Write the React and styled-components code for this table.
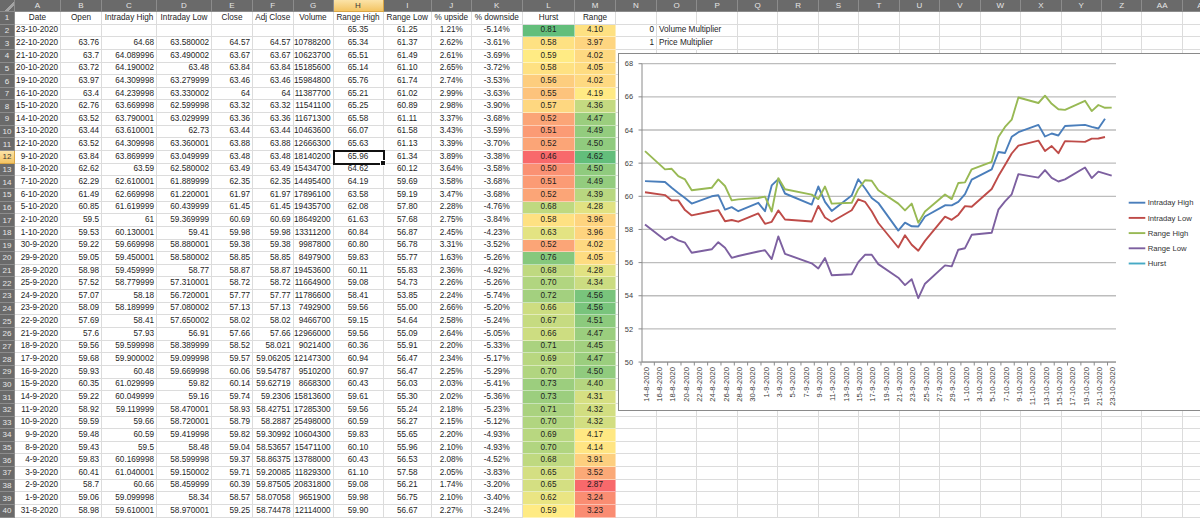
import React from 'react';
import styled, { createGlobalStyle, css } from 'styled-components';

const GlobalStyle = createGlobalStyle`
  html, body {
    margin: 0;
    padding: 0;
    background: #ffffff;
    overflow: hidden;
  }
  body {
    font-family: 'Liberation Sans', Arial, sans-serif;
  }
`;

// column widths A..AB (px)
const WIDTHS = [46, 41, 55, 55, 41, 40.5, 40, 50, 48.5, 39.5, 51.5, 52, 41, 41,
  40.46, 40.46, 40.46, 40.46, 40.46, 40.46, 40.46, 40.46, 40.46, 40.46, 40.46, 40.46, 40.46, 40.5];
const LETTERS = 'ABCDEFGHIJKLMNOPQRSTUVWXYZ'.split('').concat(['AA', 'AB']);
const ROW_COUNT = 40;
const ALIGN = ['right', 'right', 'right', 'right', 'right', 'right', 'right',
  'center', 'center', 'center', 'center', 'center', 'center'];

const HEAD = ['Date', 'Open', 'Intraday High', 'Intraday Low', 'Close', 'Adj Close', 'Volume',
  'Range High', 'Range Low', '% upside', '% downside', 'Hurst', 'Range'];

const DATA = [
  ['23-10-2020', '', '', '', '', '', '', '65.35', '61.25', '1.21%', '-5.14%', '0.81', '4.10'],
  ['22-10-2020', '63.76', '64.68', '63.580002', '64.57', '64.57', '10788200', '65.34', '61.37', '2.62%', '-3.61%', '0.58', '3.97'],
  ['21-10-2020', '63.7', '64.089996', '63.490002', '63.67', '63.67', '10623700', '65.51', '61.49', '2.61%', '-3.69%', '0.59', '4.02'],
  ['20-10-2020', '63.72', '64.190002', '63.48', '63.84', '63.84', '15185600', '65.14', '61.10', '2.65%', '-3.72%', '0.58', '4.05'],
  ['19-10-2020', '63.97', '64.309998', '63.279999', '63.46', '63.46', '15984800', '65.76', '61.74', '2.74%', '-3.53%', '0.56', '4.02'],
  ['16-10-2020', '63.4', '64.239998', '63.330002', '64', '64', '11387700', '65.21', '61.02', '2.99%', '-3.63%', '0.55', '4.19'],
  ['15-10-2020', '62.76', '63.669998', '62.599998', '63.32', '63.32', '11541100', '65.25', '60.89', '2.98%', '-3.90%', '0.57', '4.36'],
  ['14-10-2020', '63.52', '63.790001', '63.029999', '63.36', '63.36', '11671300', '65.58', '61.11', '3.37%', '-3.68%', '0.52', '4.47'],
  ['13-10-2020', '63.44', '63.610001', '62.73', '63.44', '63.44', '10463600', '66.07', '61.58', '3.43%', '-3.59%', '0.51', '4.49'],
  ['12-10-2020', '63.52', '64.309998', '63.360001', '63.88', '63.88', '12666300', '65.63', '61.13', '3.39%', '-3.70%', '0.52', '4.50'],
  ['9-10-2020', '63.84', '63.869999', '63.049999', '63.48', '63.48', '18140200', '65.96', '61.34', '3.89%', '-3.38%', '0.46', '4.62'],
  ['8-10-2020', '62.62', '63.59', '62.580002', '63.49', '63.49', '15434700', '64.62', '60.12', '3.64%', '-3.58%', '0.50', '4.50'],
  ['7-10-2020', '62.29', '62.610001', '61.889999', '62.35', '62.35', '14495400', '64.19', '59.69', '3.58%', '-3.68%', '0.51', '4.49'],
  ['6-10-2020', '61.49', '62.669998', '61.220001', '61.97', '61.97', '17896100', '63.58', '59.19', '3.47%', '-3.68%', '0.52', '4.39'],
  ['5-10-2020', '60.85', '61.619999', '60.439999', '61.45', '61.45', '19435700', '62.08', '57.80', '2.28%', '-4.76%', '0.68', '4.28'],
  ['2-10-2020', '59.5', '61', '59.369999', '60.69', '60.69', '18649200', '61.63', '57.68', '2.75%', '-3.84%', '0.58', '3.96'],
  ['1-10-2020', '59.53', '60.130001', '59.41', '59.98', '59.98', '13311200', '60.84', '56.87', '2.45%', '-4.23%', '0.63', '3.96'],
  ['30-9-2020', '59.22', '59.669998', '58.880001', '59.38', '59.38', '9987800', '60.80', '56.78', '3.31%', '-3.52%', '0.52', '4.02'],
  ['29-9-2020', '59.05', '59.450001', '58.580002', '58.85', '58.85', '8497900', '59.83', '55.77', '1.63%', '-5.26%', '0.76', '4.05'],
  ['28-9-2020', '58.98', '59.459999', '58.77', '58.87', '58.87', '19453600', '60.11', '55.83', '2.36%', '-4.92%', '0.68', '4.28'],
  ['25-9-2020', '57.52', '58.779999', '57.310001', '58.72', '58.72', '11664900', '59.08', '54.73', '2.26%', '-5.26%', '0.70', '4.34'],
  ['24-9-2020', '57.07', '58.18', '56.720001', '57.77', '57.77', '11786600', '58.41', '53.85', '2.24%', '-5.74%', '0.72', '4.56'],
  ['23-9-2020', '58.09', '58.189999', '57.080002', '57.13', '57.13', '7492900', '59.56', '55.00', '2.66%', '-5.20%', '0.66', '4.56'],
  ['22-9-2020', '57.69', '58.41', '57.650002', '58.02', '58.02', '9466700', '59.15', '54.64', '2.58%', '-5.24%', '0.67', '4.51'],
  ['21-9-2020', '57.6', '57.93', '56.91', '57.66', '57.66', '12966000', '59.56', '55.09', '2.64%', '-5.05%', '0.66', '4.47'],
  ['18-9-2020', '59.56', '59.599998', '58.389999', '58.52', '58.021', '9021400', '60.36', '55.91', '2.20%', '-5.33%', '0.71', '4.45'],
  ['17-9-2020', '59.68', '59.900002', '59.099998', '59.57', '59.06205', '12147300', '60.94', '56.47', '2.34%', '-5.17%', '0.69', '4.47'],
  ['16-9-2020', '59.93', '60.48', '59.669998', '60.06', '59.54787', '9510200', '60.97', '56.47', '2.25%', '-5.29%', '0.70', '4.50'],
  ['15-9-2020', '60.35', '61.029999', '59.82', '60.14', '59.62719', '8668300', '60.43', '56.03', '2.03%', '-5.41%', '0.73', '4.40'],
  ['14-9-2020', '59.22', '60.049999', '59.16', '59.74', '59.2306', '15813600', '59.61', '55.30', '2.02%', '-5.36%', '0.73', '4.31'],
  ['11-9-2020', '58.92', '59.119999', '58.470001', '58.93', '58.42751', '17285300', '59.56', '55.24', '2.18%', '-5.23%', '0.71', '4.32'],
  ['10-9-2020', '59.59', '59.66', '58.720001', '58.79', '58.2887', '25498000', '60.59', '56.27', '2.15%', '-5.12%', '0.70', '4.32'],
  ['9-9-2020', '59.48', '60.59', '59.419998', '59.82', '59.30992', '10604300', '59.83', '55.65', '2.20%', '-4.93%', '0.69', '4.17'],
  ['8-9-2020', '59.43', '59.5', '58.48', '59.04', '58.53657', '15471100', '60.10', '55.96', '2.10%', '-4.93%', '0.70', '4.14'],
  ['4-9-2020', '59.83', '60.169998', '58.599998', '59.37', '58.86375', '13788000', '60.43', '56.53', '2.08%', '-4.52%', '0.68', '3.91'],
  ['3-9-2020', '60.41', '61.040001', '59.150002', '59.71', '59.20085', '11829300', '61.10', '57.58', '2.05%', '-3.83%', '0.65', '3.52'],
  ['2-9-2020', '58.7', '60.66', '58.459999', '60.39', '59.87505', '20831800', '59.08', '56.21', '1.74%', '-3.20%', '0.65', '2.87'],
  ['1-9-2020', '59.06', '59.099998', '58.34', '58.57', '58.07058', '9651900', '59.98', '56.75', '2.10%', '-3.40%', '0.62', '3.24'],
  ['31-8-2020', '58.98', '59.610001', '58.970001', '59.25', '58.74478', '12114000', '59.90', '56.67', '2.27%', '-3.24%', '0.59', '3.23'],
];

// rows above the visible table that the chart still plots
const EARLY = [
  ['14-8-2020', 60.92, 60.25, 62.73, 58.30],
  ['17-8-2020', 60.86, 60.07, 61.62, 57.36],
  ['18-8-2020', 60.51, 59.75, 61.66, 57.56],
  ['19-8-2020', 60.20, 59.75, 61.22, 57.34],
  ['20-8-2020', 59.90, 59.17, 61.02, 57.20],
  ['21-8-2020', 59.56, 58.85, 60.37, 56.60],
  ['24-8-2020', 60.00, 59.10, 60.51, 56.80],
  ['25-8-2020', 60.07, 59.17, 61.02, 57.23],
  ['26-8-2020', 59.20, 58.50, 60.62, 56.89],
  ['27-8-2020', 59.35, 58.57, 59.75, 56.29],
  ['28-8-2020', 59.10, 58.47, 59.81, 56.40],
];

const START = Date.UTC(2020, 7, 14);
const dayOf = (s) => {
  const [d, m, y] = s.split('-').map(Number);
  return (Date.UTC(y, m - 1, d) - START) / 86400000;
};

// excel 3-colour scale red / yellow / green
const LOW = [248, 105, 107];
const MID = [255, 235, 132];
const HIGH = [99, 190, 123];
const mix = (a, b, t) => a.map((v, i) => Math.round(v + (b[i] - v) * t));
const scale = (v, min, mid, max) => {
  const c = v <= mid
    ? mix(LOW, MID, Math.max(0, (v - min) / (mid - min)))
    : mix(MID, HIGH, Math.min(1, (v - mid) / (max - mid)));
  return `rgb(${c.join(',')})`;
};

const Page = styled.div`
  position: relative;
  width: 1200px;
  height: 518px;
  overflow: hidden;
`;

const Sheet = styled.div`
  display: grid;
  grid-template-columns: 15px ${WIDTHS.map((w) => `${w}px`).join(' ')};
  grid-template-rows: 12px repeat(${ROW_COUNT}, 12.65px);
  font-size: 8.2px;
  color: #1e1e1e;
`;

const headBase = css`
  background: #6a6a6a;
  color: #e6e6e6;
  font-size: 8px;
  display: flex;
  align-items: center;
  justify-content: center;
  box-sizing: border-box;
  border-right: 1px solid #8c8c8c;
  border-bottom: 1px solid #8c8c8c;
`;

const activeHead = css`
  background: linear-gradient(#fbe3a8, #f3c463);
  color: #3a3a3a;
  border-right-color: #d9a646;
  border-bottom-color: #d9a646;
`;

const Corner = styled.div`
  ${headBase};
  background: linear-gradient(135deg, #6a6a6a 62%, #a4a4a4 62%, #a4a4a4 78%, #6a6a6a 78%);
`;

const ColHead = styled.div`
  ${headBase};
  ${(p) => p.$active && activeHead};
`;

const RowHead = styled.div`
  ${headBase};
  ${(p) => p.$active && activeHead};
`;

const Cell = styled.div`
  position: relative;
  box-sizing: border-box;
  border-right: 1px solid #dcdcdc;
  border-bottom: 1px solid #dcdcdc;
  padding: 0 2px;
  display: flex;
  align-items: center;
  justify-content: ${(p) => (p.$align === 'center' ? 'center' : p.$align === 'left' ? 'flex-start' : 'flex-end')};
  white-space: nowrap;
  line-height: 1;
  background: ${(p) => p.$fill || 'transparent'};
  ${(p) => p.$fill && css`
    border-right-color: rgba(255, 255, 255, 0.45);
    border-bottom-color: rgba(255, 255, 255, 0.45);
  `}
  ${(p) => p.$spill && css`
    border-right-color: transparent;
    overflow: visible;
    z-index: 1;
  `}
  ${(p) => p.$selected && css`
    outline: 2px solid #111;
    outline-offset: -1px;
    z-index: 2;
    &::after {
      content: '';
      position: absolute;
      right: -3px;
      bottom: -3px;
      width: 4px;
      height: 4px;
      background: #111;
      border: 1px solid #fff;
    }
  `}
`;

const ChartFrame = styled.div`
  position: absolute;
  left: 618px;
  top: 53px;
  width: 620px;
  height: 358px;
  box-sizing: border-box;
  background: #ffffff;
  border: 1px solid #8a8a8a;
  z-index: 5;
`;

const ChartSvg = styled.svg`
  display: block;
  font-family: 'Liberation Sans', Arial, sans-serif;
`;

const SERIES = [
  { name: 'Intraday High', color: '#4a7ebb', key: 1 },
  { name: 'Intraday Low', color: '#be4b48', key: 2 },
  { name: 'Range High', color: '#98b954', key: 3 },
  { name: 'Range Low', color: '#7d60a0', key: 4 },
  { name: 'Hurst', color: '#46aac5', key: null },
];

const yOf = (v) => 9.7 + (68 - v) * 16.575;
const xOf = (d) => 26 + 6.667 * d;

function buildPoints() {
  const rows = EARLY.map((r) => ({ d: dayOf(r[0]), v: [null, r[1], r[2], r[3], r[4]] }));
  [...DATA].reverse().forEach((r) => {
    rows.push({
      d: dayOf(r[0]),
      v: [null, r[2] ? +r[2] : null, r[3] ? +r[3] : null, +r[7], +r[8]],
    });
  });
  return rows;
}

function Chart() {
  const rows = buildPoints();
  const ticks = Array.from({ length: 10 }, (_, i) => 50 + i * 2);
  const labels = Array.from({ length: 36 }, (_, k) => {
    const dt = new Date(START + k * 2 * 86400000);
    return `${dt.getUTCDate()}-${dt.getUTCMonth() + 1}-2020`;
  });

  return (
    <ChartFrame>
      <ChartSvg width="620" height="358" viewBox="0 0 620 358">
        {ticks.map((t) => (
          <g key={t}>
            <line x1="23" x2="497" y1={yOf(t)} y2={yOf(t)} stroke="#bdbdbd" strokeWidth="1.3" />
            <line x1="19.5" x2="23" y1={yOf(t)} y2={yOf(t)} stroke="#8a8a8a" strokeWidth="1" />
            <text x="14" y={yOf(t) + 2.6} fontSize="7.4" fill="#3c3c3c" textAnchor="end">{t}</text>
          </g>
        ))}
        <line x1="23" x2="23" y1="9.7" y2="308" stroke="#8a8a8a" strokeWidth="1" />
        <line x1="23" x2="497" y1="308" y2="308" stroke="#8a8a8a" strokeWidth="1" />
        {labels.map((l, k) => (
          <g key={l}>
            <line x1={22 + 13.33 * k} x2={22 + 13.33 * k} y1="308" y2="311.5" stroke="#8a8a8a" strokeWidth="1" />
            <text
              transform={`translate(${29.7 + 13.33 * k} 313) rotate(-90)`}
              fontSize="7.6"
              fill="#3c3c3c"
              textAnchor="end"
            >
              {l}
            </text>
          </g>
        ))}
        {SERIES.filter((s) => s.key).map((s) => (
          <polyline
            key={s.name}
            fill="none"
            stroke={s.color}
            strokeWidth="1.9"
            strokeLinejoin="round"
            points={rows
              .filter((r) => r.v[s.key] != null)
              .map((r) => `${xOf(r.d).toFixed(1)},${yOf(r.v[s.key]).toFixed(1)}`)
              .join(' ')}
          />
        ))}
        {SERIES.map((s, i) => {
          const y = 148.7 + i * 15.2;
          return (
            <g key={s.name}>
              <line x1="509.7" x2="526.3" y1={y} y2={y} stroke={s.color} strokeWidth="1.9" />
              <text x="528.7" y={y + 2.7} fontSize="7.7" fill="#333">{s.name}</text>
            </g>
          );
        })}
      </ChartSvg>
    </ChartFrame>
  );
}

const EXTRA = {
  '2-14': { text: '0', align: 'right' },
  '2-15': { text: 'Volume Multiplier', align: 'left', spill: true },
  '3-14': { text: '1', align: 'right' },
  '3-15': { text: 'Price Multiplier', align: 'left', spill: true },
};

export default function App() {
  const cells = [];
  cells.push(<Corner key="corner" />);
  LETTERS.forEach((l) => cells.push(<ColHead key={`h${l}`} $active={l === 'H'}>{l}</ColHead>));

  for (let r = 1; r <= ROW_COUNT; r++) {
    cells.push(<RowHead key={`r${r}`} $active={r === 12}>{r}</RowHead>);
    for (let c = 0; c < LETTERS.length; c++) {
      let text = '';
      let align = 'right';
      let fill;
      let spill = false;
      if (c < 13) {
        if (r === 1) {
          text = HEAD[c];
          align = 'center';
        } else {
          text = DATA[r - 2][c];
          align = ALIGN[c];
          if (c === 11) fill = scale(+text, 0.46, 0.59, 0.81);
          if (c === 12) fill = scale(+text, 2.87, 4.2, 4.62);
        }
      } else if (EXTRA[`${r}-${c + 1}`]) {
        const e = EXTRA[`${r}-${c + 1}`];
        text = e.text;
        align = e.align;
        spill = !!e.spill;
      }
      cells.push(
        <Cell
          key={`${r}-${c}`}
          $align={align}
          $fill={fill}
          $spill={spill}
          $selected={r === 12 && c === 7}
        >
          {text}
        </Cell>
      );
    }
  }

  return (
    <Page>
      <GlobalStyle />
      <Sheet>{cells}</Sheet>
      <Chart />
    </Page>
  );
}
